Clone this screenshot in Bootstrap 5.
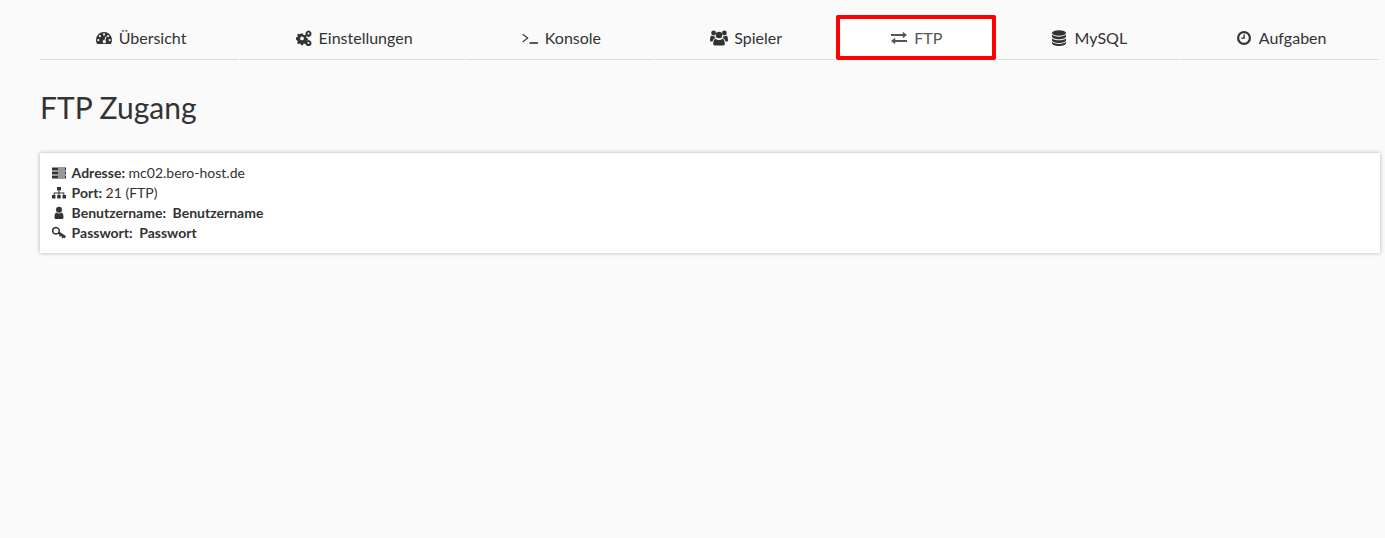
<!DOCTYPE html>
<html lang="en">
<head>
    <meta charset="UTF-8">
    <title>FTP Zugang</title>
    <link href="https://cdn.jsdelivr.net/npm/bootstrap@5.3.0/dist/css/bootstrap.min.css" rel="stylesheet">
    <style>
        body {
            font-family: Lato, "Liberation Sans", sans-serif;
            font-size: 14px;
            line-height: 20px;
            background: #fafafa;
            color: #333;
            min-height: 100vh;
            padding: 16px 5px 0 40px;
        }
        .tabs-bar { gap: 1px; margin-right: 1px; }
        .tabs-bar .tab-link {
            display: block;
            height: 44px;
            padding: 12px 14px 12px 17px;
            font-size: 16px;
            line-height: 20px;
            color: #333;
            text-align: center;
            text-decoration: none;
            border-bottom: 1px solid #ddd;
        }
        .tabs-bar .tab-active {
            position: relative;
            background: #fff;
            color: #555;
            border-bottom-color: transparent;
        }
        .tabs-bar .tab-active::after {
            content: "";
            position: absolute;
            inset: -1px -1px -1px 0;
            border: 4px solid #f00;
            border-radius: 2px;
        }
        .tab-ico { width: 16px; height: 16px; fill: #333; vertical-align: -2px; margin-right: 3px; }
        .tab-ico-wide { width: 18px; height: 16px; margin-right: 2px; }
        .tab-active .tab-ico { fill: #555; }
        .page-title { font-size: 30px; line-height: 33px; font-weight: 400; margin: 31px 0 29px; }
        .ftp-panel {
            background: #fff;
            padding: 10px 12px;
            box-shadow: 0 0 4px rgba(0, 0, 0, .3);
        }
        .info-ico { width: 14px; height: 14px; fill: #333; vertical-align: -2px; margin-right: 2px; }
        .info-key { font-weight: 700; }
        .info-val { font-weight: 700; margin-left: 3px; }
    </style>
</head>
<body>
    <ul class="nav nav-fill tabs-bar">
        <li class="nav-item"><a class="tab-link" href="#">
            <svg class="tab-ico" viewBox="0 0 16 16"><path fill-rule="evenodd" d="M8 2a8 8 0 0 0-8 8c0 1.500.4 2.900 1.100 4h13.800A8 8 0 0 0 8 2zM8 3.300a1.100 1.100 0 1 1 0 2.200 1.100 1.100 0 0 1 0-2.200zM3.900 5a1.100 1.100 0 1 1 0 2.200 1.100 1.100 0 0 1 0-2.200zM2.300 9a1.100 1.100 0 1 1 0 2.200 1.100 1.100 0 0 1 0-2.200zM13.700 9a1.100 1.100 0 1 1 0 2.200 1.100 1.100 0 0 1 0-2.200zM12.100 5a1.100 1.100 0 1 1 0 2.200 1.100 1.100 0 0 1 0-2.200zM9.700 6.200l.9.300-1.300 3.900a1.600 1.600 0 1 1-.9-.3z"/></svg>
            Übersicht</a></li>
        <li class="nav-item"><a class="tab-link" href="#">
            <svg class="tab-ico" viewBox="0 0 16 16"><path fill-rule="evenodd" d="M5 3.500h2l.3 1.300 1 .4 1.200-.7 1.400 1.400-.7 1.200.4 1 1.300.3v2l-1.300.3-.4 1 .7 1.200-1.400 1.400-1.200-.7-1 .4-.3 1.300H5l-.3-1.300-1-.4-1.200.7-1.400-1.400.7-1.200-.4-1L0 9.400v-2l1.400-.3.400-1-.7-1.200 1.400-1.400 1.200.7 1-.4zM6 6.500a1.900 1.900 0 1 0 0 3.800 1.900 1.900 0 0 0 0-3.800z"/><path fill-rule="evenodd" d="M12.500 0l.5.900.9-.2.500 1 .9.300-.2 1 .7.700-.7.700.2 1-.9.300-.5 1-.9-.2-.5.900-.5-.9-.9.200-.5-1-.9-.3.200-1-.7-.7.7-.7-.2-1 .9-.3.5-1 .9.200zM12.500 2.500a1 1 0 1 0 0 2 1 1 0 0 0 0-2z"/><path fill-rule="evenodd" d="M12.500 9.500l.5.900.9-.2.500 1 .9.300-.2 1 .7.700-.7.700.2 1-.9.300-.5 1-.9-.2-.5.900-.5-.9-.9.200-.5-1-.9-.3.200-1-.7-.7.7-.7-.2-1 .9-.3.5-1 .9.200zM12.500 12a1 1 0 1 0 0 2 1 1 0 0 0 0-2z"/></svg>
            Einstellungen</a></li>
        <li class="nav-item"><a class="tab-link" href="#">
            <svg class="tab-ico" viewBox="0 0 16 16"><path d="M1 3.800l5.600 4.300L1 12.400l-.7-.9 4.500-3.400L.3 4.700z"/><rect x="7.500" y="12.200" width="8.500" height="1.600"/></svg>
            Konsole</a></li>
        <li class="nav-item"><a class="tab-link" href="#">
            <svg class="tab-ico tab-ico-wide" viewBox="0 0 18 16"><circle cx="9" cy="5" r="3.300"/><circle cx="3.600" cy="3" r="2.400"/><circle cx="14.400" cy="3" r="2.400"/><path d="M4.600 15.500c-.8 0-1.400-.5-1.400-1.400 0-2.700.7-5.200 2.400-5.400.7.700 2 1.300 3.400 1.300s2.700-.6 3.400-1.300c1.700.2 2.400 2.700 2.400 5.400 0 .9-.6 1.400-1.400 1.400z"/><path d="M4.300 6c.2.800.6 1.400 1.100 1.900-1.500.3-2.400 1.800-2.900 3.600H1c-.6 0-1-.4-1-1.100C0 7.900.5 5.600 1.800 5.600c.6.500 1.500.8 2.500.4zM13.700 6c-.2.800-.6 1.400-1.100 1.900 1.500.3 2.400 1.800 2.900 3.600H17c.6 0 1-.4 1-1.100 0-2.500-.5-4.800-1.800-4.800-.6.500-1.500.8-2.500.4z"/></svg>
            Spieler</a></li>
        <li class="nav-item"><a class="tab-link tab-active" href="#">
            <svg class="tab-ico" viewBox="0 0 16 16"><path d="M11.800 1.800L16 5l-4.200 3.200V6H0V4h11.800z"/><path d="M4.200 7.800V10H16v2H4.200v2.200L0 11z"/></svg>
            FTP</a></li>
        <li class="nav-item"><a class="tab-link" href="#">
            <svg class="tab-ico" viewBox="0 0 16 16"><ellipse cx="8" cy="3" rx="7" ry="2.800"/><path d="M1 4.600C2.200 6 5 6.700 8 6.700s5.800-.7 7-2.100v2c0 1.500-3.100 2.700-7 2.700S1 8.100 1 6.600z"/><path d="M1 8.200c1.200 1.400 4 2.100 7 2.100s5.800-.7 7-2.100v2c0 1.500-3.100 2.700-7 2.700s-7-1.200-7-2.700z"/><path d="M1 11.800c1.200 1.400 4 2.100 7 2.100s5.800-.7 7-2.100v1.400c0 1.500-3.100 2.800-7 2.800s-7-1.300-7-2.800z"/></svg>
            MySQL</a></li>
        <li class="nav-item"><a class="tab-link" href="#">
            <svg class="tab-ico" viewBox="0 0 16 16"><path fill-rule="evenodd" d="M8 1a7 7 0 1 0 0 14A7 7 0 0 0 8 1zm0 2.200a4.800 4.800 0 1 1 0 9.600 4.800 4.800 0 0 1 0-9.600z"/><path d="M7.400 4.500h1.400v4.200H5.200V7.400h2.200z"/></svg>
            Aufgaben</a></li>
    </ul>

    <h1 class="page-title">FTP Zugang</h1>

    <div class="ftp-panel">
        <div>
            <svg class="info-ico" viewBox="0 0 14 14"><path d="M0 1.500h14v3H0zM0 5.500h14v3H0zM0 9.500h14v3H0z"/><path fill="#fff" d="M6 2.600h7v.8H6zM6 6.600h7v.8H6zM6 10.600h7v.8H6z"/></svg>
            <span class="info-key">Adresse:</span> mc02.bero-host.de
        </div>
        <div>
            <svg class="info-ico" viewBox="0 0 14 14"><rect x="5" y="1" width="4" height="3.500"/><rect x="0" y="9" width="3.500" height="3.500"/><rect x="5.200" y="9" width="3.500" height="3.500"/><rect x="10.500" y="9" width="3.500" height="3.500"/><path d="M6.500 4.500h1v2h4.800V9h-1V7.500H7.500V9h-1V7.500H2.700V9h-1V6.500h4.800z"/></svg>
            <span class="info-key">Port:</span> 21 (FTP)
        </div>
        <div>
            <svg class="info-ico" viewBox="0 0 14 14"><circle cx="7" cy="3.800" r="3"/><path d="M4.400 6.500C3 7 2.500 8.800 2.500 11.200c0 1 .6 1.800 1.500 1.800h6c.9 0 1.500-.8 1.500-1.800 0-2.400-.5-4.200-1.900-4.700-.7.700-1.600 1.100-2.600 1.100s-1.900-.4-2.600-1.100z"/></svg>
            <span class="info-key">Benutzername:</span> <span class="info-val">Benutzername</span>
        </div>
        <div>
            <svg class="info-ico" viewBox="0 0 14 14"><path fill-rule="evenodd" d="M4 .8a4 4 0 0 1 3.800 5.200l6 3.900-.8 2.400-1.500-.9-.7 1.200-1.300-.8.500-1.300-1-.7-.7 1.100-1.200-.8.600-1.100-1.500-1A4 4 0 1 1 4 .8zM4 2.300a2.500 2.500 0 1 0 0 5 2.500 2.500 0 0 0 0-5z"/></svg>
            <span class="info-key">Passwort:</span> <span class="info-val">Passwort</span>
        </div>
    </div>

    <script src="https://cdn.jsdelivr.net/npm/bootstrap@5.3.0/dist/js/bootstrap.bundle.min.js"></script>
</body>
</html>
